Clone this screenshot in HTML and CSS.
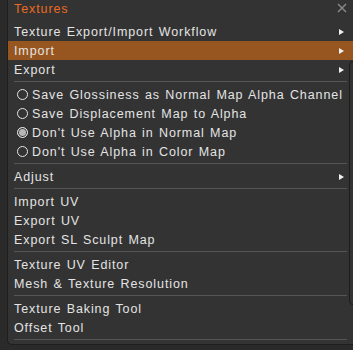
FILE: index.html
```html
<!DOCTYPE html>
<html lang="en">
	<head>
		<meta charset="UTF-8" />
		<meta name="viewport" content="width=device-width, initial-scale=1.0" />
		<title>Textures</title>
		<link rel="stylesheet" href="styles.css">
	</head>
	<body>
		<div class="panel">
			<div class="title-row">
				<span class="title">Textures</span>
				<svg class="close" width="10" height="10" viewBox="0 0 10 10">
					<path d="M1 1 L9 9 M9 1 L1 9" stroke="#8a8a8a" stroke-width="1.4" fill="none" />
				</svg>
			</div>

			<div class="item">Texture Export/Import Workflow<span class="arrow"></span></div>
			<div class="item active">Import<span class="arrow"></span></div>
			<div class="item">Export<span class="arrow"></span></div>
			<div class="sep"></div>

			<div class="item radio-item"><span class="radio"></span>Save Glossiness as Normal Map Alpha Channel</div>
			<div class="item radio-item"><span class="radio"></span>Save Displacement Map to Alpha</div>
			<div class="item radio-item"><span class="radio checked"></span>Don't Use Alpha in Normal Map</div>
			<div class="item radio-item"><span class="radio"></span>Don't Use Alpha in Color Map</div>
			<div class="sep"></div>

			<div class="item">Adjust<span class="arrow"></span></div>
			<div class="sep"></div>

			<div class="item">Import UV</div>
			<div class="item">Export UV</div>
			<div class="item">Export SL Sculpt Map</div>
			<div class="sep"></div>

			<div class="item">Texture UV Editor</div>
			<div class="item">Mesh &amp; Texture Resolution</div>
			<div class="sep"></div>

			<div class="item">Texture Baking Tool</div>
			<div class="item">Offset Tool</div>
			<div class="sep"></div>

			<div class="scroll"></div>
		</div>
	</body>
</html>
```

FILE: styles.css
```css
body {
	margin: 0;
	width: 353px;
	height: 350px;
	overflow: hidden;
	background-color: #2a2a2a;
	font-family: "Liberation Sans", Arial, sans-serif;
	font-size: 12.5px;
	letter-spacing: 0.9px;
	word-spacing: 1px;
	color: #e4e4e4;
}
.panel {
	position: relative;
	margin-left: 7px;
	background-color: #333333;
	border-left: 1px solid #1e1e1e;
	border-bottom: 1px solid #1e1e1e;
	border-bottom-left-radius: 5px;
	padding-bottom: 1px;
}
.title-row {
	height: 22px;
	display: flex;
	justify-content: space-between;
	align-items: flex-start;
	padding: 0 6px 0 6px;
}
.title {
	color: #ec6a1e;
	line-height: 18px;
}
.close {
	margin-top: 3px;
}
.item {
	box-sizing: border-box;
	height: 19px;
	line-height: 18px;
	padding: 1px 9px 0 6px;
	display: flex;
	justify-content: space-between;
	align-items: center;
	white-space: nowrap;
}
.item.active {
	background-color: #97561f;
}
.arrow {
	width: 0;
	height: 0;
	margin-top: -1px;
	border-left: 5px solid #f0f0f0;
	border-top: 3.5px solid transparent;
	border-bottom: 3.5px solid transparent;
}
.radio-item {
	justify-content: flex-start;
	padding-left: 9px;
}
.radio {
	width: 9px;
	height: 9px;
	margin-top: -1px;
	border: 1.5px solid #e6e6e6;
	border-radius: 50%;
	margin-right: 4px;
	flex: none;
}
.radio.checked {
	background-color: #b8b8b8;
	box-shadow: inset 0 0 0 1px #333333;
}
.sep {
	height: 1px;
	background-color: #555555;
	margin: 2px 6px 3px 6px;
}
.scroll {
	position: absolute;
	top: 61px;
	left: 341px;
	width: 12px;
	height: 242px;
	border: 1px solid #1c1c1c;
	border-radius: 4px;
	background-color: #333333;
}
```
